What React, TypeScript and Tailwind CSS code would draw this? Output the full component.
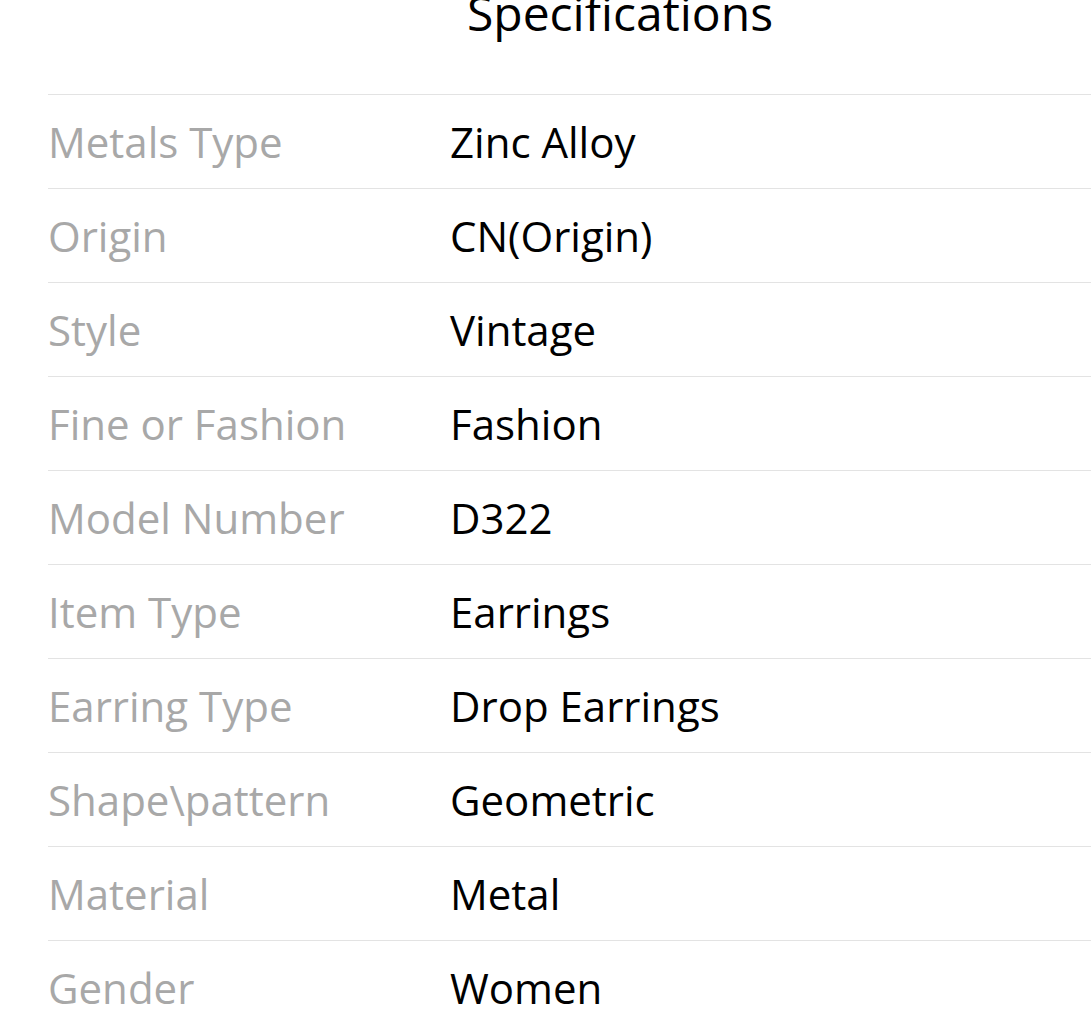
const specs = [
  { label: "Metals Type", value: "Zinc Alloy" },
  { label: "Origin", value: "CN(Origin)" },
  { label: "Style", value: "Vintage" },
  { label: "Fine or Fashion", value: "Fashion" },
  { label: "Model Number", value: "D322" },
  { label: "Item Type", value: "Earrings" },
  { label: "Earring Type", value: "Drop Earrings" },
  { label: "Shape\\pattern", value: "Geometric" },
  { label: "Material", value: "Metal" },
  { label: "Gender", value: "Women" },
];

export default function App() {
  return (
    <main
      className="h-[1029px] w-[1091px] overflow-hidden bg-white"
      style={{ fontFamily: '"Open Sans", "Noto Sans", sans-serif' }}
    >
      <section className="ml-[48px] w-[1144px]">
        <div className="flex h-[94px] flex-col">
          <h1 className="-mt-[20px] text-center text-[48px] leading-[66px] font-normal text-black">
            Specifications
          </h1>
        </div>

        {specs.map((item) => (
          <div
            key={item.label}
            className="flex h-[94px] items-center border-t border-[#e3e3e3]"
          >
            <p className="w-[402px] text-[42px] leading-[57px] text-[#a8a8a8]">
              {item.label}
            </p>
            <p className="flex-1 text-[42px] leading-[57px] text-black">
              {item.value}
            </p>
          </div>
        ))}
      </section>
    </main>
  );
}
